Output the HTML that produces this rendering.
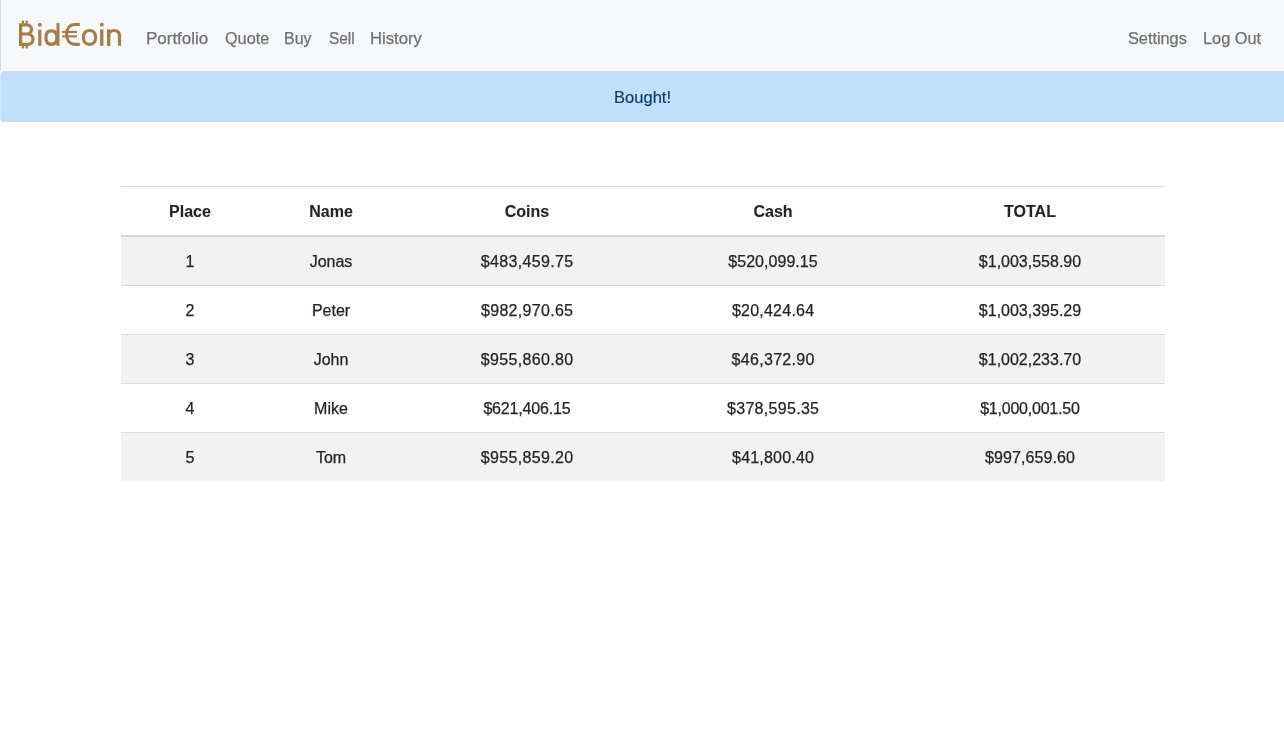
<!DOCTYPE html>
<html>
<head>
<meta charset="utf-8">
<style>
*{box-sizing:border-box;}
html,body{margin:0;padding:0;}
body{will-change:transform;font-family:"Liberation Sans",sans-serif;font-size:16px;line-height:1.5;color:#212529;background:#fff;width:1284px;height:738px;overflow:hidden;position:relative;}
.nav{position:absolute;left:0;top:0;width:1284px;height:71px;background:#f7f8fa;border-left:1px solid #dadde0;box-shadow:inset 0 -1px 0 #f8fbfd;}
.link{position:absolute;top:27px;font-size:16px;line-height:24px;color:#6f7071;white-space:nowrap;transform-origin:0 0;}
.alert{position:absolute;left:0;top:71px;width:1300px;height:51px;background:#c0dffb;border:1px solid #cfdbe7;border-left-color:#d6e6f6;border-radius:4px;box-shadow:inset 0 1px 0 #c8dcf2,inset 0 -1px 0 #c8dcf2;}
.alert span{position:absolute;left:613.3px;top:14px;transform:scaleX(1.034);transform-origin:0 0;line-height:24px;color:#0a3875;}
table{position:absolute;left:121px;top:186px;width:1044px;border-collapse:collapse;}
th,td{text-align:center;padding:2px 0 0 0;height:49px;vertical-align:middle;border-top:1px solid #dbdbdc;}
th{font-weight:bold;-webkit-text-stroke:0.1px #212529;height:49px;border-bottom:2px solid #d7d8da;}
tbody tr:nth-child(odd) td{background:#f2f2f2;}
tbody tr:first-child td{height:50px;}
tbody tr:last-child td{height:48px;}
td{-webkit-text-stroke:0.25px #212529;}
.link{-webkit-text-stroke:0.25px #6f7071;}
.alert span{-webkit-text-stroke:0.15px #0a3875;}
</style>
</head>
<body>
<div class="nav"></div>
<svg width="130" height="60" viewBox="0 0 130 60" style="position:absolute;left:0;top:0" fill="none" stroke="#a37d4a" stroke-width="3.2">
<path d="M20.6,23.3 V45.8 M19,24.9 H26.9 A4.55,4.55 0 0 1 26.9,34 H19 M19,34 H27.85 A5.15,5.15 0 0 1 27.85,44.3 H19"/>
<g fill="#a37d4a" stroke="none">
<rect x="21.8" y="20.6" width="2.2" height="2.9"/><rect x="25.5" y="20.6" width="2.4" height="2.9"/>
<rect x="21.8" y="45.5" width="2.2" height="2.9"/><rect x="25.5" y="45.5" width="2.4" height="2.9"/>
<circle cx="39.8" cy="24.8" r="1.95"/><rect x="38.2" y="29.7" width="3.2" height="16.1"/>
<rect x="56.5" y="23.1" width="3" height="22.7"/>
<rect x="62.1" y="30.9" width="14.9" height="2.1"/><rect x="62.1" y="35.4" width="14.9" height="2.0"/>
<circle cx="101.8" cy="24.7" r="1.95"/><rect x="100.1" y="29.4" width="3.3" height="16.4"/>
<rect x="107" y="29.4" width="3.2" height="16.4"/>
</g>
<path d="M51.40,30.80 C54.81,30.80 56.90,33.38 56.90,37.60 C56.90,41.82 54.81,44.40 51.40,44.40 C47.99,44.40 45.90,41.82 45.90,37.60 C45.90,33.38 47.99,30.80 51.40,30.80 Z"/>
<path d="M79.80,24.50 L75.00,24.50 C70.02,24.50 66.70,28.46 66.70,34.40 C66.70,40.34 70.02,44.30 75.00,44.30 L79.80,44.30"/>
<path d="M89.50,30.50 C93.28,30.50 95.60,33.14 95.60,37.45 C95.60,41.76 93.28,44.40 89.50,44.40 C85.72,44.40 83.40,41.76 83.40,37.45 C83.40,33.14 85.72,30.50 89.50,30.50 Z"/>
<path d="M108.6,45.8 V36 C108.6,32.5 111,30.5 114,30.5 C117.3,30.5 119.5,32.5 119.5,36 V45.8"/>
</svg>
<div class="link" style="left:146.4px;transform:scaleX(1.06)">Portfolio</div>
<div class="link" style="left:224.7px;transform:scaleX(1.014)">Quote</div>
<div class="link" style="left:284px">Buy</div>
<div class="link" style="left:328.6px;transform:scaleX(0.96)">Sell</div>
<div class="link" style="left:370px;transform:scaleX(1.04)">History</div>
<div class="link" style="left:1127.8px;transform:scaleX(1.017)">Settings</div>
<div class="link" style="left:1202.5px;transform:scaleX(1.02)">Log Out</div>
<div class="alert"><span>Bought!</span></div>
<table>
<thead><tr><th style="width:138px">Place</th><th style="width:144px">Name</th><th style="width:248px">Coins</th><th style="width:244px">Cash</th><th>TOTAL</th></tr></thead>
<tbody>
<tr><td>1</td><td>Jonas</td><td><span style="letter-spacing:0.33px;margin-right:-0.33px">$483,459.75</span></td><td><span style="letter-spacing:0.04px;margin-right:-0.04px">$520,099.15</span></td><td>$1,003,558.90</td></tr>
<tr><td>2</td><td>Peter</td><td><span style="letter-spacing:0.3px;margin-right:-0.3px">$982,970.65</span></td><td><span style="letter-spacing:0.24px;margin-right:-0.24px">$20,424.64</span></td><td>$1,003,395.29</td></tr>
<tr><td>3</td><td>John</td><td><span style="letter-spacing:0.35px;margin-right:-0.35px">$955,860.80</span></td><td><span style="letter-spacing:0.3px;margin-right:-0.3px">$46,372.90</span></td><td>$1,002,233.70</td></tr>
<tr><td>4</td><td>Mike</td><td><span style="letter-spacing:-0.18px;margin-right:0.18px">$621,406.15</span></td><td><span style="letter-spacing:0.3px;margin-right:-0.3px">$378,595.35</span></td><td><span style="letter-spacing:-0.22px;margin-right:0.22px">$1,000,001.50</span></td></tr>
<tr><td>5</td><td>Tom</td><td><span style="letter-spacing:0.35px;margin-right:-0.35px">$955,859.20</span></td><td><span style="letter-spacing:0.19px;margin-right:-0.19px">$41,800.40</span></td><td><span style="letter-spacing:0.1px;margin-right:-0.1px">$997,659.60</span></td></tr>
</tbody>
</table>
</body>
</html>
